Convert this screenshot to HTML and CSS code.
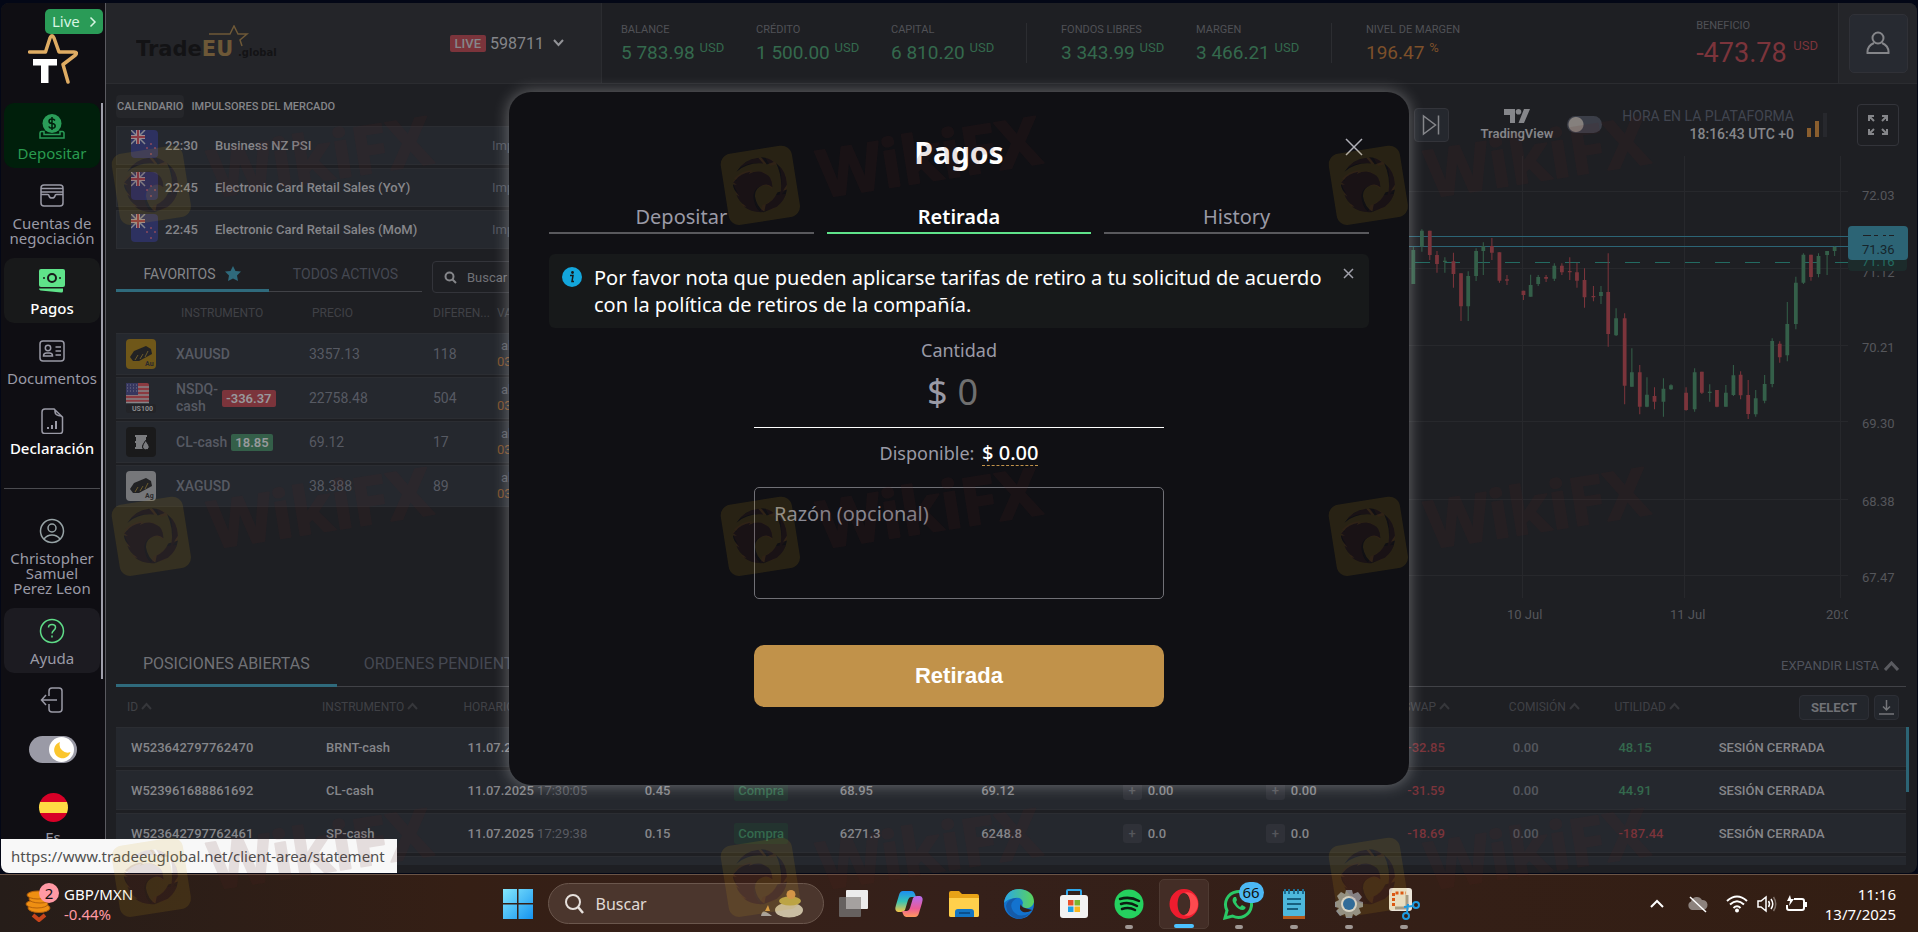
FILE: index.html
```html
<!DOCTYPE html>
<html lang="es">
<head>
  <meta charset="UTF-8" />
  <meta name="viewport" content="width=device-width, initial-scale=1.0"/>
  <title>TradeEU Global - Pagos</title>
  <link rel="stylesheet" href="styles.css">
</head>
<body>
  <div class="app">
    <nav class="sidebar">
      <div class="brand">
        <button class="live-btn">Live
          <svg width="8" height="12" viewBox="0 0 8 12"><path d="M1.5 1.5 6 6 1.5 10.5" fill="none" stroke="#d6f5e2" stroke-width="1.5"/></svg>
        </button>
        <svg class="brand-logo" width="50" height="50" viewBox="0 0 50 50">
          <path d="M1.5 18H17.5L22 4q2-4.500 4 0L31 18H46q4 0 1.500 3L35 30.5 40 48" fill="none" stroke="#dfac63" stroke-width="3.5" stroke-linecap="round" stroke-linejoin="round"/>
          <path d="M5 25H29V31.5H20.5V49H13V31.5H5Z" fill="#fff"/>
        </svg>
      </div>

      <div class="menu">
        <a href="#" class="item deposit">
          <svg width="26" height="26" viewBox="0 0 26 26" fill="none" stroke="#2a9d58" stroke-width="1.5"><path d="M5 18.5H2.5A1.5 1.5 0 0 0 1 20v5H25V20a1.5 1.5 0 0 0-1.5-1.5H21V21.5H5Z"/><circle cx="13" cy="10.5" r="9.5" fill="#2a9d58" stroke="none"/><path d="M16 7.5q-1-1.500-3-1.500-3 0-3 2.200t3 2.300q3.200.2 3.200 2.500t-3.200 2.300q-2.300 0-3.300-1.800M13 4v13" stroke="#001f0b"/></svg>
          <span>Depositar</span>
        </a>
        <a href="#" class="item">
          <svg width="26" height="26" viewBox="0 0 26 26" fill="none" stroke="#9a9aa6" stroke-width="1.5"><rect x="2" y="2" width="22" height="21" rx="3"/><path d="M2 5.5H24M2 9H24M2 11.5H8.5Q10 11.5 10 13q.5 2 3 2t3-2q0-1.500 1.500-1.500H24"/></svg>
          <span>Cuentas de negociación</span>
        </a>
        <a href="#" class="item active">
          <svg width="26" height="26" viewBox="0 0 26 26"><rect y="1" width="26" height="18" rx="2" fill="#5fe38a"/><circle cx="13" cy="10" r="4" fill="none" stroke="#18191a" stroke-width="2"/><circle cx="5" cy="10" r="1" fill="#18191a"/><circle cx="21" cy="10" r="1" fill="#18191a"/><path d="M0 20.5H24V23q0 2-2 1.500L1.5 22.5Q0 22 0 20.5Z" fill="#5fe38a"/></svg>
          <span>Pagos</span>
        </a>
        <a href="#" class="item">
          <svg width="26" height="26" viewBox="0 0 26 26" fill="none" stroke="#9a9aa6" stroke-width="1.5"><rect x="1" y="3" width="24" height="20" rx="3"/><circle cx="9" cy="10" r="2.7"/><path d="M4.5 18q0-3 3-3h3q3 0 3 3ZM16.5 9H22M16.5 13H22M16.5 17H22"/></svg>
          <span>Documentos</span>
        </a>
        <a href="#" class="item hover">
          <svg width="26" height="26" viewBox="0 0 26 26" fill="none" stroke="#9a9aa6" stroke-width="1.5"><path d="M15 1H6Q3 1 3 4V23q0 2.500 2.500 2.500H21q2.500 0 2.500-2.500V9ZM15 1q1 0 1 2.500 0 3 3.500 4Q23.5 8 23.5 9.500"/><path d="M9 21v-2M13 21v-4M17 21v-8" stroke-width="2"/></svg>
          <span>Declaración</span>
        </a>
        <hr>
        <a href="#" class="item">
          <svg width="26" height="26" viewBox="0 0 26 26" fill="none" stroke="#97a3a6" stroke-width="1.5"><circle cx="13" cy="13" r="11.5"/><circle cx="13" cy="10" r="4"/><path d="M5 21q3-4 8-4t8 4"/></svg>
          <span>Christopher<br>Samuel<br>Perez Leon</span>
        </a>
        <a href="#" class="item help">
          <svg width="26" height="26" viewBox="0 0 26 26" fill="none" stroke="#5fdc88" stroke-width="1.5"><circle cx="13" cy="13" r="11.5"/><path d="M9.5 9.5Q9.5 6.5 13 6.5t3.500 3q0 1.500-1.700 2.800T13 15.5M13 17.5v2"/></svg>
          <span>Ayuda</span>
        </a>
      </div>

      <a href="#" class="logout" aria-label="Salir">
        <svg width="26" height="26" viewBox="0 0 26 26" fill="none" stroke="#9a9aa6" stroke-width="1.5"><path d="M9 9V4q0-3 3-3h7q3 0 3 3V22q0 3-3 3H12q-3 0-3-3V17M17 13H1.500M6 8 1.500 13 6 18"/></svg>
      </a>
      <button class="theme" aria-label="Tema">
        <span><svg width="18" height="18" viewBox="0 0 18 18"><path d="M7 1A8.3 8.3 0 1 0 17.5 11 8 8 0 0 1 7 1Z" fill="#fbc62d"/></svg></span>
      </button>
      <a href="#" class="lang">
        <i class="flag-es"></i>
        <span>Es</span>
      </a>
      <i class="side-scroll"></i>
    </nav>

    <main class="main">
      <header class="topbar">
        <div class="account">
          <svg class="wordmark" width="146" height="36" viewBox="0 0 146 36">
            <text x="0" y="31" class="wm-main">Trade<tspan fill="#6d5837">EU</tspan></text>
            <text x="102" y="31" class="wm-small">.global</text>
            <path d="M73 9H94L98 1 102 9H111L104 15 106 21" fill="none" stroke="#6d5837" stroke-width="1.5"/>
          </svg>
          <button class="acc-picker"><b>LIVE</b> 598711
            <svg width="11" height="8" viewBox="0 0 11 8"><path d="M1 1 5.5 6 10 1" fill="none" stroke="#929397" stroke-width="2"/></svg>
          </button>
        </div>
        <dl class="stats">
          <div><dt>BALANCE</dt><dd>5 783.98 <sup>USD</sup></dd></div>
          <div><dt>CRÉDITO</dt><dd>1 500.00 <sup>USD</sup></dd></div>
          <div><dt>CAPITAL</dt><dd>6 810.20 <sup>USD</sup></dd></div>
          <div class="sep"><dt>FONDOS LIBRES</dt><dd>3 343.99 <sup>USD</sup></dd></div>
          <div><dt>MARGEN</dt><dd>3 466.21 <sup>USD</sup></dd></div>
          <div class="sep level"><dt>NIVEL DE MARGEN</dt><dd>196.47 <sup>%</sup></dd></div>
          <div class="profit"><dt>BENEFICIO</dt><dd>-473.78 <sup>USD</sup></dd></div>
        </dl>
        <div class="user">
          <button aria-label="Perfil">
            <svg width="24" height="24" viewBox="0 0 24 24" fill="none" stroke="#85868a" stroke-width="2"><circle cx="12" cy="7" r="5.5"/><path d="M8 12Q1 15 1.5 22H22.5Q23 15 16 12"/></svg>
          </button>
        </div>
      </header>

      <div class="content">
        <section class="market">
          <div class="cal-tabs">
            <button class="on">CALENDARIO</button>
            <button>IMPULSORES DEL MERCADO</button>
          </div>
          <ul class="events">
            <li><svg width="27" height="28"><use href="#nz"/></svg><time>22:30</time><span>Business NZ PSI</span><em>Impacto</em></li>
            <li><svg width="27" height="28"><use href="#nz"/></svg><time>22:45</time><span>Electronic Card Retail Sales (YoY)</span><em>Impacto</em></li>
            <li><svg width="27" height="28"><use href="#nz"/></svg><time>22:45</time><span>Electronic Card Retail Sales (MoM)</span><em>Impacto</em></li>
          </ul>

          <div class="fav-bar">
            <button class="on">FAVORITOS <svg width="16" height="15" viewBox="0 0 16 15"><path d="M8 0 10.5 5 16 5.5 12 9.5 13 15 8 12.5 3 15 4 9.5 0 5.5 5.5 5Z" fill="#2f6a7c"/></svg></button>
            <button>TODOS ACTIVOS</button>
            <label class="search">
              <svg width="13" height="13" viewBox="0 0 13 13" fill="none" stroke="#85868a" stroke-width="2"><circle cx="5.5" cy="5.5" r="4"/><path d="M8.5 8.5 12 12"/></svg>
              <input type="text" placeholder="Buscar" aria-label="Buscar">
            </label>
          </div>

          <table class="assets">
            <colgroup><col class="c-name"><col class="c-price"><col class="c-diff"><col></colgroup>
            <thead><tr><th>INSTRUMENTO</th><th>PRECIO</th><th>DIFEREN...</th><th>VARIACIÓN</th></tr></thead>
            <tbody>
              <tr>
                <td><div class="asset"><svg width="30" height="30"><rect width="30" height="30" rx="4" fill="#6f5719"/><use href="#bar"/><text x="19" y="27">Au</text></svg>XAUUSD</div></td>
                <td>3357.13</td><td>118</td><td class="time">abre en<b>03:43:17</b></td>
              </tr>
              <tr>
                <td><div class="asset"><svg width="30" height="30"><rect width="23" height="20" rx="2" fill="#8b3a40"/><path d="M0 4H23M0 8H23M0 12H23M0 16H23M0 19.500H23" stroke="#858588" stroke-width="1.5"/><rect width="12" height="12" fill="#36375f"/><path d="M1 2H11M1 5H11M1 8H11" stroke="#74758c" stroke-dasharray="1 2"/><rect y="21" width="30" height="9" rx="3" fill="#232428"/><text x="6" y="28" fill="#8b8c8f">US100</text></svg><span>NSDQ-<br>cash</span><b class="loss">-336.37</b></div></td>
                <td>22758.48</td><td>504</td><td class="time">abre en<b>03:43:17</b></td>
              </tr>
              <tr>
                <td><div class="asset"><svg width="30" height="30"><rect width="30" height="30" rx="4" fill="#1a1a1b"/><path d="M9 8H21V10H20V13L16 19Q16 21 17 22H9V20H10V16H9V14H10V10H9Z" fill="#7a7b7e"/><path d="M19.5 13.500Q24 19 23 21A3.5 3.5 0 0 1 16.5 20Q16.5 18 19.5 13.500Z" fill="#7a7b7e" stroke="#1a1a1b"/></svg>CL-cash<b class="gain">18.85</b></div></td>
                <td>69.12</td><td>17</td><td class="time">abre en<b>03:43:17</b></td>
              </tr>
              <tr>
                <td><div class="asset"><svg width="30" height="30"><rect width="30" height="30" rx="4" fill="#76777a"/><use href="#bar"/><text x="19" y="27">Ag</text></svg>XAGUSD</div></td>
                <td>38.388</td><td>89</td><td class="time">abre en<b>03:43:17</b></td>
              </tr>
            </tbody>
          </table>
        </section>

        <section class="chart">
          <div class="chart-tools">
            <button class="next" aria-label="Siguiente"><svg width="18" height="22" viewBox="0 0 18 22" fill="none" stroke="#85868a" stroke-width="1.5"><path d="M1.5 2V20L13.5 11ZM16.5 1.500V20.500"/></svg></button>
            <label class="tv" for="tv-switch">
              <svg width="26" height="14" viewBox="0 0 26 14" fill="#85868a"><path d="M0 0H11V14H6V6H0ZM20 0H26L20 14H14.500Z"/><circle cx="14.5" cy="2.8" r="2.8"/></svg>
              TradingView
            </label>
            <input type="checkbox" id="tv-switch" class="switch">
            <div class="clock"><span>HORA EN LA PLATAFORMA</span><b>18:16:43 UTC +0</b></div>
            <svg class="signal" width="20" height="24" viewBox="0 0 20 24"><path d="M2 24V15M10 24V8" stroke="#8a5e2e" stroke-width="4"/><path d="M18 24V0" stroke="#27282d" stroke-width="4"/></svg>
            <button class="full" aria-label="Pantalla completa"><svg width="20" height="20" viewBox="0 0 20 20" fill="none" stroke="#85868a" stroke-width="2"><path d="M1 6V1H6M14 1H19V6M19 14V19H14M6 19H1V14M1 1 6 6M19 1 14 6M19 19 14 14M1 19 6 14"/></svg></button>
          </div>

          <svg class="plot" width="538" height="480" viewBox="0 50 538 480">
            <path d="M143.5 56V498M305.5 56V498M461.5 56V498M0 91.5H469M0 168.5H469M0 245.5H469M0 321.5H469M0 399.5H469M0 475.5H469" stroke="#27282c" fill="none"/>
            <path d="M0 136.5H469M0 146.5H469" stroke="#2c6475"/>
            <path d="M6 162.500H469" stroke="#236b62" stroke-dasharray="15 15"/>
            <g transform="scale(.3431 .3333)" fill="none">
              <path class="up wick" d="M100 440V552M125 388V455M192 472V518M260 514V663M283 445V543M304 427V525M442 524V590M464 525V558M511 490V543M647 558V612M691 625V708M737 745V860M781 832V922M829 835V950M851 853V870M920 805V935M964 853V905M1011 855V920M1033 795V888M1098 870V950M1124 825V910M1146 715V862M1190 606V784M1215 530V688M1237 460V552M1281 460V532M1306 453V525M1328 438V468"/>
              <path class="up body" d="M100 450V552M125 392V440M192 482V486M260 528V619M283 453V528M304 438V453M442 555V590M464 531V552M511 497V536M647 576V588M691 655V706M737 817V860M781 884V920M829 866V905M851 856V868M920 817V928M964 875V879M1011 878V920M1033 826V885M1098 895V943M1124 852V902M1146 723V852M1190 672V766M1215 548V672M1237 464V548M1281 468V522M1306 453V465M1328 441V453"/>
              <path class="down wick" d="M148 392V480M169 453V518M217 458V563M239 520V663M329 414V480M351 457V548M373 525V555M421 572V600M487 525V546M533 490V525M556 472V540M577 488V563M599 505V623M625 558V604M668 460V740M716 640V913M760 795V943M803 862V928M895 862V932M941 815V882M985 870V922M1054 814V898M1076 840V957M1168 724V788M1259 464V542"/>
              <path class="down body" d="M148 392V465M169 465V492M217 484V522M239 520V619M329 438V458M351 457V542M373 538V542M421 572V585M487 531V536M533 497V517M556 513V517M577 517V542M599 540V592M625 588V592M668 576V702M716 655V857M760 817V920M803 888V905M895 878V930M941 815V878M985 870V920M1054 824V886M1076 885V942M1168 731V772M1259 464V531"/>
            </g>
            <g class="axis">
              <text x="483" y="100">72.03</text>
              <text x="483" y="177">71.12</text>
              <text x="483" y="252">70.21</text>
              <text x="483" y="328">69.30</text>
              <text x="483" y="406">68.38</text>
              <text x="483" y="482">67.47</text>
              <text x="128" y="519">10 Jul</text>
              <text x="291" y="519">11 Jul</text>
              <svg width="469" height="530"><text x="447" y="519">20:00</text></svg>
            </g>
            <rect x="469" y="140" width="59" height="31" rx="4" fill="#1c2b2b"/>
            <text x="483" y="166" class="tag-under">71.16</text>
            <rect x="469" y="126" width="60" height="34" rx="4" fill="#2c6475"/>
            <path d="M484 135.500H492M495 135.500H499M504 135.500H507M510 135.500H515" stroke="#1e1f23"/>
            <text x="483" y="154" class="tag">71.36</text>
          </svg>
        </section>
      </div>

      <section class="positions">
        <div class="pos-tabs">
          <button class="on">POSICIONES ABIERTAS</button>
          <button>ORDENES PENDIENTES</button>
          <button class="expand">EXPANDIR LISTA <svg width="15" height="10" viewBox="0 0 15 10"><path d="M1 9 7.5 2 14 9" fill="none" stroke="#5a5b60" stroke-width="3"/></svg></button>
        </div>
        <div class="pos-body">
          <table class="orders">
            <colgroup>
              <col style="width:10.9%"><col style="width:7.9%"><col style="width:9.9%"><col style="width:5%"><col style="width:5.9%"><col style="width:7.9%"><col style="width:7.9%"><col style="width:8%"><col style="width:7.9%"><col style="width:5.9%"><col style="width:5.9%"><col style="width:5.6%"><col>
            </colgroup>
            <thead>
              <tr>
                <th>ID <svg class="sort"><use href="#up"/></svg></th>
                <th>INSTRUMENTO <svg class="sort"><use href="#up"/></svg></th>
                <th>HORARIO <svg class="sort"><use href="#up"/></svg></th>
                <th></th><th></th><th></th><th></th><th></th><th></th>
                <th>SWAP <svg class="sort"><use href="#up"/></svg></th>
                <th>COMISIÓN <svg class="sort"><use href="#up"/></svg></th>
                <th>UTILIDAD <svg class="sort"><use href="#up"/></svg></th>
                <th><div class="actions"><button>SELECT</button><button class="dl" aria-label="Descargar"><svg width="15" height="15" viewBox="0 0 15 15" fill="none" stroke="#75767a" stroke-width="1.5"><path d="M7.5 0V10M4 6.5 7.5 10 11 6.5M0 14H15"/></svg></button></div></th>
              </tr>
            </thead>
            <tbody>
              <tr><td>W523642797762470</td><td>BRNT-cash</td><td>11.07.2025 <i>17:30:22</i></td><td>0.30</td><td><mark>Compra</mark></td><td>70.45</td><td>70.61</td><td><s>+</s>0.00</td><td><s>+</s>0.00</td><td class="neg">-32.85</td><td class="dim">0.00</td><td class="pos">48.15</td><td>SESIÓN CERRADA</td></tr>
              <tr><td>W523961688861692</td><td>CL-cash</td><td>11.07.2025 <i>17:30:05</i></td><td>0.45</td><td><mark>Compra</mark></td><td>68.95</td><td>69.12</td><td><s>+</s>0.00</td><td><s>+</s>0.00</td><td class="neg">-31.59</td><td class="dim">0.00</td><td class="pos">44.91</td><td>SESIÓN CERRADA</td></tr>
              <tr><td>W523642797762461</td><td>SP-cash</td><td>11.07.2025 <i>17:29:38</i></td><td>0.15</td><td><mark>Compra</mark></td><td>6271.3</td><td>6248.8</td><td><s>+</s>0.0</td><td><s>+</s>0.0</td><td class="neg">-18.69</td><td class="dim">0.00</td><td class="neg">-187.44</td><td>SESIÓN CERRADA</td></tr>
              <tr><td></td><td></td><td></td><td></td><td></td><td></td><td></td><td></td><td></td><td></td><td></td><td></td><td></td></tr>
            </tbody>
          </table>
          <i class="thumb"></i>
        </div>
      </section>
    </main>

    <div class="overlay">
      <div class="modal" role="dialog" aria-label="Pagos">
        <button class="close" aria-label="Cerrar"><svg width="18" height="18" viewBox="0 0 18 18"><path d="M1 1 17 17M17 1 1 17" stroke="#b0b0b8" stroke-width="1.5"/></svg></button>
        <h1>Pagos</h1>
        <div class="tabs">
          <button>Depositar</button>
          <button class="on">Retirada</button>
          <button>History</button>
        </div>
        <div class="notice">
          <svg width="20" height="20" viewBox="0 0 20 20"><circle cx="10" cy="10" r="10" fill="#13a6dc"/><circle cx="10.5" cy="5.5" r="1.4" fill="#17191a"/><path d="M8 8.500H11L10 14.500H12" fill="none" stroke="#17191a" stroke-width="1.5"/></svg>
          <p>Por favor nota que pueden aplicarse tarifas de retiro a tu solicitud de acuerdo con la política de retiros de la compañía.</p>
          <button aria-label="Ocultar aviso"><svg width="11" height="11" viewBox="0 0 11 11"><path d="M1 1 10 10M10 1 1 10" stroke="#a0a0aa" stroke-width="1.5"/></svg></button>
        </div>
        <form class="withdraw">
          <label for="amount">Cantidad</label>
          <div class="amount"><span>$</span><input id="amount" type="text" placeholder="0"></div>
          <p class="avail">Disponible: <b>$ 0.00</b></p>
          <textarea placeholder="Razón (opcional)" aria-label="Razón (opcional)"></textarea>
          <button type="button">Retirada</button>
        </form>
      </div>
    </div>

    <div class="status-url">https://www.tradeeuglobal.net/client-area/statement</div>
  </div>

  <footer class="taskbar">
    <div class="widget">
      <div class="coins">
        <svg width="34" height="38" viewBox="0 0 34 38"><g fill="#ef8f12" stroke="#b5610b"><ellipse cx="14" cy="24" rx="11" ry="4.5"/><ellipse cx="12" cy="20" rx="11" ry="4"/><ellipse cx="15" cy="15" rx="11" ry="4"/><ellipse cx="13" cy="11" rx="11" ry="4"/></g><path d="M8 31 14 36 20 31" fill="none" stroke="#c8451b" stroke-width="4"/></svg>
        <span>2</span>
      </div>
      <p>GBP/MXN<b>-0.44%</b></p>
    </div>

    <div class="dock">
      <button aria-label="Inicio"><svg width="30" height="30" viewBox="0 0 30 30"><defs><linearGradient id="win" x2="1" y2="1"><stop stop-color="#84e8fd"/><stop offset="1" stop-color="#1593f0"/></linearGradient></defs><path d="M0 0H14V14H0ZM15.5 0H30V14H15.5ZM0 15.5H14V30H0ZM15.5 15.5H30V30H15.5Z" fill="url(#win)"/></svg></button>
      <label class="find">
        <svg width="20" height="20" viewBox="0 0 20 20" fill="none" stroke="#e6e0dc" stroke-width="2"><circle cx="9" cy="8" r="7"/><path d="M14 13 19 19" stroke-width="2.5"/></svg>
        <input type="text" placeholder="Buscar" aria-label="Buscar en Windows">
        <svg width="42" height="28" viewBox="0 0 42 28"><ellipse cx="28" cy="20" rx="14" ry="7.5" fill="#c9bda2"/><ellipse cx="29" cy="11" rx="11" ry="4.5" fill="#b9a54b"/><circle cx="30" cy="4.5" r="4.5" fill="#d4954f"/><path d="M0 26Q1 20 5 22T11 26Z" fill="#a9a39b"/><path d="M4 21 7 15 9 21Z" fill="#d79b4a"/></svg>
      </label>
      <button aria-label="Vista de tareas"><svg width="30" height="30" viewBox="0 0 30 30"><rect y="8" width="22" height="20" rx="1" fill="#66615f"/><rect x="7" y="1" width="22" height="19" rx="1" fill="#ececec"/><path d="M7 8H22V20H7Z" fill="#a5a19f"/></svg></button>
      <button aria-label="Copilot"><svg width="30" height="30" viewBox="0 0 30 30"><defs><linearGradient id="cp" x2="0" y2="1"><stop stop-color="#1b8df2"/><stop offset=".5" stop-color="#38c3b4"/><stop offset="1" stop-color="#f5c545"/></linearGradient><linearGradient id="cq" x2="0" y2="1"><stop stop-color="#b36df0"/><stop offset=".6" stop-color="#ec5b96"/><stop offset="1" stop-color="#ff9a5c"/></linearGradient></defs><path d="M9 2H18Q20 2 21 5L22 8H17Q15 8 14 11L11 21Q10 23 7 23H4Q0 22 2 16L5 6Q6 2 9 2Z" fill="url(#cp)"/><path d="M21 28H12Q10 28 9 25L8 22H13Q15 22 16 19L19 9Q20 7 23 7H26Q30 8 28 14L25 24Q24 28 21 28Z" fill="url(#cq)"/></svg></button>
      <button aria-label="Explorador"><svg width="32" height="30" viewBox="0 0 32 30"><path d="M1 4Q1 2 3 2H11L14 5H29Q31 5 31 7V26Q31 28 29 28H3Q1 28 1 26Z" fill="#e8a317"/><path d="M1 9H31V26Q31 28 29 28H3Q1 28 1 26Z" fill="#ffd04c"/><path d="M7 28V23Q7 20 10 20H23Q26 20 26 23V28Z" fill="#1275c4"/><path d="M11 24H22" stroke="#0a4f8c" stroke-width="2"/></svg></button>
      <button aria-label="Edge"><svg width="30" height="30" viewBox="0 0 30 30"><defs><linearGradient id="eg"><stop stop-color="#2aa7e8"/><stop offset="1" stop-color="#5bd35a"/></linearGradient></defs><circle cx="15" cy="15" r="15" fill="#1373cf"/><path d="M0 14Q2 0 16 0 30 2 30 13 28 20 21 19 17 18 19 14 18 8 11 9 3 10 0 14Z" fill="url(#eg)"/><path d="M13 9Q4 14 9 22 15 30 26 24 20 30 14 30 3 27 2 17 4 9 13 9Z" fill="#155ba9"/><path d="M17 15Q14 20 19 23 24 24 28 21 24 20 21 19 17 18 17 15Z" fill="#35201a"/></svg></button>
      <button aria-label="Store"><svg width="30" height="30" viewBox="0 0 30 30"><path d="M8 7V2Q8 1 9 1H21Q22 1 22 2V7" fill="none" stroke="#2fa7ea" stroke-width="2"/><rect x="1" y="6" width="28" height="23" rx="3" fill="#f2f2f2"/><path d="M9 11H14.5V16.5H9Z" fill="#e8502b"/><path d="M15.5 11H21V16.5H15.5Z" fill="#7db52e"/><path d="M9 17.5H14.5V23H9Z" fill="#1e9fe4"/><path d="M15.5 17.5H21V23H15.5Z" fill="#f8b71c"/></svg></button>
      <button aria-label="Spotify" class="run"><svg width="30" height="30" viewBox="0 0 30 30"><circle cx="15" cy="15" r="14.5" fill="#25d15f"/><path d="M6 10Q16 7 25 12M7 15Q15 12.5 23 17M8 20Q15 17.5 21 21" fill="none" stroke="#0c1c12" stroke-width="2.5" stroke-linecap="round"/></svg></button>
      <button aria-label="Opera" class="run current"><svg width="30" height="30" viewBox="0 0 30 30"><path fill-rule="evenodd" d="M15 0A14.5 15 0 0 1 15 30 14.5 15 0 0 1 15 0ZM15 4C6.5 4 6.5 26 15 26S23.5 4 15 4Z" fill="#ee1c2e"/><path d="M15 4C23.5 4 23.5 26 15 26 20 29 29 24 29 15S20 1 15 4Z" fill="#ff4a4f"/></svg></button>
      <button aria-label="WhatsApp" class="run"><svg width="32" height="32" viewBox="0 0 32 32"><path d="M2 30 4 22.500A13 13 0 1 1 9.500 28Z" fill="none" stroke="#2ac866" stroke-width="3"/><path d="M11 9Q8 12 11 16 15 22 20 22 23 21 22.500 19L19 17 17 19Q14 17 13 14L14 12 13 9Z" fill="#2ac866"/></svg><span class="count">66</span></button>
      <button aria-label="Bloc de notas" class="run"><svg width="24" height="30" viewBox="0 0 24 30"><path d="M1 26H23V30H1Z" fill="#b25a1c"/><rect x="1" y="2" width="22" height="25" rx="1" fill="#4db8dc"/><path d="M3 0V5M7 0V5M12 0V5M16 0V5M21 0V5" stroke="#1c6d92" stroke-width="2"/><path d="M5 10H19M5 15H19M5 20H16" stroke="#17607f" stroke-width="2"/></svg></button>
      <button aria-label="Ajustes" class="run"><svg width="30" height="30" viewBox="0 0 30 30"><path d="M12 1H18L19 5 24 3 28 8 25 12 29 13V18L25 19 27 24 22 27 19 25 18 29H12L11 25 6 27 2 22 5 19 1 18V13L5 11 3 7 7 3 11 5Z" fill="#8d8f92"/><circle cx="15" cy="15" r="8" fill="#d8dadc"/><circle cx="15" cy="15" r="6" fill="#1b64ac"/></svg></button>
      <button aria-label="Recortes" class="run"><svg width="32" height="32" viewBox="0 0 32 32"><rect x="1" y="0" width="23" height="23" rx="3" fill="#ece6da"/><path d="M5.5 18V5H18" fill="none" stroke="#dd4e13" stroke-width="3" stroke-dasharray="3 2"/><path d="M19 7V20H7" fill="none" stroke="#a39c90" stroke-width="3"/><g fill="none" stroke="#1e9be0" stroke-width="2"><circle cx="28" cy="17" r="3"/><circle cx="18" cy="28" r="3"/><path d="M25 18 16 19M19 25 20 16"/></g></svg></button>
    </div>

    <div class="tray">
      <svg width="14" height="10" viewBox="0 0 14 10"><path d="M1 8 7 2 13 8" fill="none" stroke="#fff" stroke-width="2"/></svg>
      <svg class="cloud" width="21" height="18" viewBox="0 0 21 18"><path d="M5 15A4.5 4.5 0 0 1 4 6.5 6 6 0 0 1 15 5 5 5 0 0 1 16 15Z" fill="#8c827d"/><path d="M3 2 19 17" stroke="#fff" stroke-width="1.5"/></svg>
      <svg width="22" height="18" viewBox="0 0 22 18" fill="none" stroke="#fff" stroke-width="2"><path d="M1 6Q11-3 21 6M4 9.5Q11 3 18 9.5M7.5 13Q11 9.5 14.5 13"/><circle cx="11" cy="15.5" r="1"/></svg>
      <svg width="20" height="18" viewBox="0 0 20 18" fill="none" stroke="#fff" stroke-width="1.5"><path d="M1 6H4L9 2V16L4 12H1ZM11.5 6Q13.5 9 11.5 12M14 4Q17.5 9 14 14"/><path d="M16.5 2Q21 9 16.5 16" stroke="#7d6f67"/></svg>
      <svg width="21" height="18" viewBox="0 0 21 18" fill="none" stroke="#fff" stroke-width="2"><path d="M8 4H16Q18 4 18 6V13Q18 15 16 15H3Q1 15 1 13V10M20 7V12"/><path d="M4 0 1 6H4L3 11 8 4H5Z" fill="#fff" stroke="none"/></svg>
      <p>11:16<br>13/7/2025</p>
    </div>
  </footer>

  <svg class="watermark" width="100%" height="100%" aria-hidden="true">
    <defs>
      <g id="hawk">
        <path stroke="none" d="M56 70Q84 36 128 38L140 58Q96 46 56 70ZM136 38Q158 42 172 58L150 62ZM178 62Q206 92 200 132L176 158Q192 108 178 62ZM168 150 198 146Q188 178 160 192L120 202 128 180Q152 174 168 150Z"/>
        <path stroke="none" d="M52 92Q66 78 98 76L92 82Q124 72 142 90 160 100 156 132 144 118 128 122 104 126 100 150 100 184 122 202 84 200 62 176L70 178Q48 158 46 138L54 144Q38 122 40 106L52 108 42 100Z"/>
      </g>
      <mask id="cut"><rect x="-20" y="-20" width="290" height="290" fill="#fff"/><use href="#hawk" fill="#000"/></mask>
      <g id="wiki">
        <g transform="scale(.3333)">
          <rect x="13" y="13" width="216" height="216" rx="32" transform="rotate(-9 121 121)" fill="rgb(207,161,26)" fill-opacity=".13" mask="url(#cut)"/>
          <use href="#hawk" fill="rgb(93,35,35)" opacity=".12"/>
        </g>
        <text transform="translate(102 53) rotate(-9)" class="wiki-text">WikiFX</text>
      </g>
      <g id="nz">
        <rect width="27" height="28" rx="4" fill="#2d3160"/>
        <path d="M0 0 14 14M14 0 0 14" stroke="#85868f" stroke-width="1.5"/>
        <path d="M7 0V14M0 7H14" stroke="#9a8c92" stroke-width="4"/>
        <path d="M7 0V14M0 7H14" stroke="#8b3a44" stroke-width="2"/>
        <g fill="#8b4a5c"><circle cx="20" cy="14" r="1"/><circle cx="16" cy="18" r="1"/><circle cx="24" cy="18" r="1"/><circle cx="20" cy="24" r="1"/></g>
      </g>
      <g id="bar"><path d="M4 18 8 12 20 7 25 10 26 15 13 22 7 22Z" fill="#222224"/><path d="M9 21 12 16M14 20 17 15M19 18 22 12" stroke="#6b5a2c"/></g>
      <g id="up"><path d="M1 7 5.5 2 10 7" fill="none" stroke="#36373b" stroke-width="2"/></g>
    </defs>
    <use href="#wiki" x="111" y="145"/><use href="#wiki" x="720" y="145"/><use href="#wiki" x="1328" y="145"/>
    <use href="#wiki" x="111" y="496"/><use href="#wiki" x="720" y="496"/><use href="#wiki" x="1328" y="496"/>
    <use href="#wiki" x="111" y="837"/><use href="#wiki" x="720" y="837"/><use href="#wiki" x="1328" y="837"/>
  </svg>
</body>
</html>
```

FILE: styles.css
```css
* {
  margin: 0;
  padding: 0;
  box-sizing: border-box;
}

body {
  height: 100vh;
  background: #030716;
  display: flex;
  flex-direction: column;
  overflow: hidden;
  font-family: Roboto, "Liberation Sans", sans-serif;
  font-size: 14px;
  color: #85868a;
}

button, input, textarea {
  font: inherit;
  color: inherit;
  background: none;
  border: 0;
  outline: 0;
}

a {
  color: inherit;
  text-decoration: none;
}

svg {
  flex: none;
  display: block;
}

.app {
  flex: 1;
  min-height: 0;
  margin: 3px 1px 1px;
  display: flex;
  position: relative;
  background: #1e1f23;
  border-radius: 8px;
  overflow: hidden;
}

/* Sidebar */
.sidebar {
  flex: none;
  width: 105px;
  position: relative;
  background: #0f0e13;
  border-right: 1px solid #5a5a60;
  display: flex;
  flex-direction: column;
  align-items: center;
  font-family: "Noto Sans", sans-serif;
  font-size: 15px;
  line-height: 15px;
  color: #9a9aa6;
}

.brand {
  align-self: stretch;
  height: 100px;
  padding: 6px 2px 0 27px;
  display: flex;
  flex-direction: column;
}

.live-btn {
  align-self: flex-end;
  width: 58px;
  height: 25px;
  padding: 0 6px 0 7px;
  display: flex;
  align-items: center;
  justify-content: space-between;
  background: #2a9b57;
  color: #d6f5e2;
  border-radius: 5px;
}

.menu {
  align-self: stretch;
  padding: 0 5px 0 3px;
  display: flex;
  flex-direction: column;
  gap: 5px;
}

.item {
  padding: 10px 0 7px;
  border-radius: 10px;
  display: flex;
  flex-direction: column;
  align-items: center;
  gap: 7px;
  text-align: center;
}

.deposit {
  background: #001f0b;
  color: #2a9b50;
}

.active {
  background: #18191a;
  color: #fff;
  font-weight: 500;
}

.hover {
  color: #fff;
  font-weight: 500;
}

.help {
  background: #1c1b21;
}

.menu hr {
  border: 0;
  border-top: 1px solid #4b4b50;
  margin: 20px 0 14px;
}

.logout {
  margin-top: 14px;
}

.theme {
  margin-top: 23px;
  width: 48px;
  height: 27px;
  padding: 1px 3px;
  border-radius: 14px;
  background: #9a9aa6;
  display: flex;
  justify-content: flex-end;
}

.theme span {
  width: 25px;
  height: 25px;
  border-radius: 50%;
  background: #fff;
  display: grid;
  place-items: center;
}

.lang {
  margin-top: 30px;
  display: flex;
  flex-direction: column;
  align-items: center;
  gap: 8px;
}

.flag-es {
  width: 29px;
  height: 29px;
  border-radius: 50%;
  background: linear-gradient(#d80027 32%, #ffda44 32% 68%, #d80027 68%);
}

.side-scroll {
  position: absolute;
  top: 100px;
  right: 2px;
  width: 2px;
  height: 576px;
  background: #a0a0ac;
}

/* Top bar */
.main {
  flex: 1;
  min-width: 0;
  display: flex;
  flex-direction: column;
}

.topbar {
  height: 81px;
  display: flex;
  border-bottom: 1px solid #2b2c30;
}

.account {
  flex: none;
  width: 496px;
  padding: 0 37px 0 30px;
  background: #242529;
  border-right: 1px solid #2b2c30;
  display: flex;
  align-items: center;
  justify-content: space-between;
}

.wm-main, .wm-small {
  font-family: "DejaVu Sans", sans-serif;
  font-weight: bold;
  font-size: 21px;
  fill: #131315;
}

.wm-small {
  font-size: 10px;
}

.acc-picker {
  display: flex;
  align-items: center;
  gap: 4px;
  font-size: 16px;
}

.acc-picker b {
  padding: 0 5px;
  line-height: 17px;
  font-size: 13px;
  font-weight: 500;
  background: #7b343b;
  border-radius: 2px;
}

.acc-picker svg {
  margin-left: 5px;
}

.stats {
  flex: 1;
  display: flex;
  align-items: center;
  padding-left: 19px;
  color: #34694d;
}

.stats div {
  width: 135px;
  height: 40px;
  line-height: 14px;
}

.stats .sep {
  width: 170px;
  padding-left: 34px;
  border-left: 1px solid #2c2d31;
}

.stats dt {
  font-size: 11px;
  color: #505156;
}

.stats dd {
  font-size: 19px;
  line-height: 32px;
  white-space: nowrap;
}

.stats sup {
  font-size: 13px;
  line-height: 1;
}

.stats .level dd {
  color: #7d502a;
}

.stats .profit {
  width: auto;
  margin-left: auto;
  margin-right: 20px;
  height: 48px;
}

.stats .profit dd {
  font-size: 27px;
  line-height: 41px;
  color: #7b343b;
}

.stats .profit sup {
  font-size: 13px;
  vertical-align: 12px;
}

.user {
  width: 79px;
  background: #242529;
  border-left: 1px solid #2b2c30;
  display: grid;
  place-items: center;
}

.user button {
  width: 59px;
  height: 59px;
  background: #272a31;
  border: 1px solid #303137;
  border-radius: 5px;
  display: grid;
  place-items: center;
}

/* Calendar and assets */
.content {
  flex: 1;
  min-height: 0;
  display: flex;
}

.market {
  flex: 0 0 560px;
  padding-left: 10px;
}

.cal-tabs {
  padding: 11px 0 8px;
  display: flex;
  gap: 6px;
}

.cal-tabs button {
  height: 23px;
  padding: 0 1px;
  font-size: 11px;
  font-weight: 500;
  border-radius: 4px;
}

.cal-tabs .on {
  background: #25262a;
}

.events {
  list-style: none;
  display: flex;
  flex-direction: column;
  gap: 3px;
}

.events li {
  height: 39px;
  padding: 0 14px;
  display: flex;
  align-items: center;
  background: #25282e;
  border: 1px solid #2b2d32;
  font-size: 13px;
  font-weight: 500;
}

.events svg {
  align-self: flex-start;
  margin-top: 3px;
}

.events time {
  width: 57px;
  padding-left: 7px;
}

.events span {
  width: 277px;
}

.events em {
  font-style: normal;
  font-weight: 400;
  color: #50545f;
}

.fav-bar {
  display: flex;
  height: 43px;
  align-items: flex-end;
}

.fav-bar button {
  width: 153px;
  height: 33px;
  padding-bottom: 3px;
  display: flex;
  align-items: center;
  justify-content: center;
  gap: 10px;
  color: #454852;
  border-bottom: 1px solid #414247;
}

.fav-bar .on {
  padding-bottom: 1px;
  color: #85868a;
  border-bottom: 3px solid #2f6a7c;
}

.search {
  margin-left: 10px;
  margin-bottom: -1px;
  height: 32px;
  width: 128px;
  padding: 0 11px;
  display: flex;
  align-items: center;
  gap: 10px;
  border: 1px solid #33343a;
  border-radius: 4px;
  font-size: 13px;
}

.search input {
  width: 80px;
}

.search input::placeholder {
  color: #707176;
}

.assets {
  width: 100%;
  table-layout: fixed;
  border-spacing: 0 2px;
}

.c-name { width: 193px; }
.c-price { width: 124px; }
.c-diff { width: 64px; }

th {
  font-size: 12px;
  font-weight: 400;
  text-align: left;
  color: #404146;
  white-space: nowrap;
}

.assets th {
  height: 37px;
}

.assets th:first-child {
  padding-left: 65px;
}

.assets th:nth-child(2) {
  padding-left: 3px;
}

.assets td {
  height: 42px;
  background: #25282e;
  border-top: 1px solid #2b2d32;
  border-bottom: 1px solid #2b2d32;
  color: #575a63;
}

.asset {
  padding-left: 10px;
  display: flex;
  align-items: center;
  font-weight: 500;
  line-height: 17px;
}

.asset svg {
  margin-right: 20px;
}

.asset svg text {
  font-size: 7px;
  font-weight: bold;
  fill: #2a2a2c;
}

.asset svg text[fill] {
  fill: #8b8c8f;
}

.asset b {
  margin-left: 4px;
  padding: 0 4px;
  font-size: 13px;
  font-weight: 600;
  border-radius: 2px;
  color: #98999c;
}

.loss { background: #7b343b; }
.gain { background: #345f49; }

.assets .time {
  line-height: 16px;
  padding-left: 4px;
  font-size: 13px;
}

.time b {
  display: block;
  margin-left: -4px;
  font-weight: 400;
  color: #7d502a;
}

/* Chart */
.chart {
  flex: 1;
  min-width: 0;
  display: flex;
  flex-direction: column;
  align-items: flex-end;
}

.chart-tools {
  margin: 18px 18px 0 0;
  height: 45px;
  display: flex;
  align-items: center;
}

.chart-tools button {
  display: grid;
  place-items: center;
  border: 1px solid #33343a;
  border-radius: 4px;
}

.next {
  width: 35px;
  height: 34px;
  margin-right: 32px;
  background: #25282e;
}

.tv {
  display: flex;
  flex-direction: column;
  align-items: center;
  gap: 3px;
  font-size: 13px;
  font-weight: 600;
}

.switch {
  appearance: none;
  width: 35px;
  height: 17px;
  margin: 0 20px 0 14px;
  border-radius: 9px;
  background: radial-gradient(circle at 9px 50%, #85807d 7px, #3b3e48 8px);
}

.clock {
  text-align: right;
  font-size: 14px;
  line-height: 18px;
  color: #414550;
}

.clock b {
  display: block;
  font-weight: 500;
  color: #85868a;
}

.signal {
  margin: 0 30px 0 13px;
}

.full {
  width: 42px;
  height: 42px;
}

.plot {
  margin-top: 3px;
}

.up { stroke: #345f49; }
.down { stroke: #7b343b; }
.wick { stroke-width: 3; }
.body { stroke-width: 11; }

.axis text, .tag, .tag-under {
  font-size: 13px;
  fill: #55565b;
}

.plot .tag { fill: #16242b; }
.plot .tag-under { fill: #236b62; }

/* Positions */
.pos-tabs {
  height: 47px;
  margin: 0 11px 0 10px;
  display: flex;
  border-bottom: 1px solid #414247;
}

.pos-tabs button {
  padding: 0 27px;
  margin-bottom: -1px;
  font-size: 16px;
  color: #454852;
}

.pos-tabs .on {
  padding-top: 3px;
  color: #707176;
  border-bottom: 3px solid #2f6a7c;
}

.pos-tabs .expand {
  margin-left: auto;
  padding: 4px 7px 0 0;
  display: flex;
  align-items: center;
  gap: 5px;
  font-size: 13px;
  color: #50535c;
}

.pos-body {
  height: 178px;
  margin: 0 11px 8px 10px;
  position: relative;
  clip-path: inset(0 -3px 0 0);
}

.orders {
  width: 100%;
  table-layout: fixed;
  border-spacing: 0 3px;
}

.orders th {
  height: 34px;
  padding-left: 11px;
}

.sort {
  display: inline-block;
  width: 11px;
  height: 9px;
}

.orders td {
  height: 40px;
  padding-left: 15px;
  background: #25282e;
  border-top: 1px solid #2b2d32;
  border-bottom: 1px solid #2b2d32;
  font-size: 13px;
  font-weight: 500;
  color: #85868a;
  white-space: nowrap;
}

.orders i {
  font-style: normal;
  font-weight: 400;
  color: #595b62;
}

.orders mark {
  padding: 3px 4px;
  background: #23332f;
  color: #34694d;
  border-radius: 2px;
}

.orders s {
  display: inline-block;
  width: 19px;
  margin-right: 6px;
  line-height: 19px;
  text-align: center;
  text-decoration: none;
  background: #2f3138;
  color: #55565b;
  border-radius: 3px;
}

.orders .neg { color: #7b343b; }
.orders .pos { color: #34694d; }
.orders .dim { color: #55585f; }

.actions {
  display: flex;
  justify-content: flex-end;
  gap: 5px;
  padding-right: 7px;
}

.actions button {
  height: 25px;
  padding: 0 11px;
  font-size: 13px;
  font-weight: 700;
  color: #707176;
  background: #23262c;
  border: 1px solid #2d2f36;
  border-radius: 4px;
}

.actions .dl {
  padding: 0 4px;
}

.thumb {
  position: absolute;
  top: 40px;
  right: -3px;
  width: 3px;
  height: 65px;
  background: #2c6475;
}

/* Modal */
.overlay {
  position: absolute;
  inset: 0;
  display: grid;
  place-items: center;
  font-family: "Noto Sans", sans-serif;
}

.modal {
  position: relative;
  width: 900px;
  padding: 37px 40px 78px;
  background: #101014;
  border-radius: 22px;
  box-shadow: 0 0 16px rgba(255, 255, 255, 0.35);
  color: #9a9aa6;
  text-align: center;
}

.close {
  position: absolute;
  top: 46px;
  right: 46px;
}

.modal h1 {
  font-size: 30px;
  line-height: 48px;
  color: #fff;
}

.tabs {
  margin-top: 23px;
  display: grid;
  grid-template-columns: repeat(3, 1fr);
  gap: 13px;
}

.tabs button {
  height: 34px;
  padding-top: 2px;
  font-size: 20px;
  line-height: 30px;
  border-bottom: 2px solid #59595d;
}

.tabs .on {
  color: #fff;
  font-weight: 600;
  border-color: #5fe38a;
}

.notice {
  margin: 20px 0 10px;
  padding: 10px 13px;
  display: flex;
  align-items: flex-start;
  background: #17191a;
  border-radius: 6px;
}

.notice > svg {
  margin: 3px 12px 0 0;
}

.notice p {
  flex: 1;
  text-align: left;
  font-size: 20px;
  line-height: 27px;
  color: #fff;
}

.notice button {
  padding: 4px 2px 0 0;
}

.withdraw {
  width: 410px;
  margin: 0 auto;
  display: flex;
  flex-direction: column;
  font-size: 18px;
  line-height: 24px;
}

.amount {
  height: 66px;
  margin-bottom: 13px;
  padding: 0 0 5px 173px;
  display: flex;
  align-items: center;
  gap: 10px;
  font-size: 36px;
  border-bottom: 1px solid #fff;
}

.amount input {
  width: 100px;
}

.amount input::placeholder {
  color: #6f6f6f;
}

.avail {
  margin-bottom: 21px;
}

.avail b {
  display: inline-block;
  margin-left: 3px;
  font-size: 20px;
  font-weight: 500;
  color: #fff;
  border-bottom: 1px dashed #c1924a;
}

.withdraw textarea {
  height: 112px;
  padding: 11px 19px;
  font-size: 20px;
  line-height: 30px;
  border: 1px solid #707076;
  border-radius: 5px;
  resize: none;
}

.withdraw textarea::placeholder {
  color: #8b8b95;
}

.withdraw button {
  height: 62px;
  margin-top: 46px;
  font: bold 22px "Liberation Sans", Arial, sans-serif;
  color: #fff;
  background: #c1924a;
  border-radius: 10px;
}

.status-url {
  position: absolute;
  left: 0;
  bottom: 0;
  padding: 0 12px 0 10px;
  font: 15px/34px "Noto Sans", sans-serif;
  color: #505050;
  background: #f8f8f8;
}

/* Taskbar */
.taskbar {
  flex: none;
  height: 58px;
  padding: 0 22px 0 25px;
  display: grid;
  grid-template-columns: 1fr auto 1fr;
  align-items: center;
  border-top: 1px solid #6b5547;
  background: linear-gradient(90deg, #261d19, #351f15 24%, #35201a 50%, #331e13);
  font-family: "Noto Sans", sans-serif;
  font-size: 15px;
  line-height: 20px;
  color: #fff;
}

.widget {
  display: flex;
  gap: 5px;
}

.widget b {
  display: block;
  font-weight: 400;
  color: #ff99a4;
}

.coins {
  position: relative;
}

.coins span {
  position: absolute;
  top: -1px;
  right: 0;
  width: 20px;
  height: 20px;
  text-align: center;
  border-radius: 50%;
  background: #ff99a4;
  color: #111;
}

.dock {
  display: flex;
  align-items: center;
  gap: 5px;
}

.dock button {
  position: relative;
  width: 50px;
  height: 50px;
  display: grid;
  place-items: center;
  border-radius: 5px;
}

.run::after {
  content: "";
  position: absolute;
  bottom: 0;
  width: 8px;
  height: 4px;
  border-radius: 2px;
  background: #a09894;
}

.dock .current {
  background: #432d26;
  border: 1px solid #4e3a32;
}

.current::after {
  width: 20px;
  background: #4cc2ff;
}

.count {
  position: absolute;
  top: 3px;
  right: 0;
  width: 25px;
  line-height: 21px;
  text-align: center;
  border-radius: 11px;
  background: #4cb8f5;
  color: #111;
}

.find {
  width: 276px;
  height: 41px;
  padding: 0 20px 0 15px;
  display: flex;
  align-items: center;
  gap: 12px;
  border: 1px solid #6b574d;
  border-radius: 21px;
  background: #4b362d;
  font-size: 16px;
}

.find input {
  flex: 1;
  min-width: 0;
}

.find input::placeholder {
  color: #e0dad6;
}

.tray {
  display: flex;
  justify-content: flex-end;
  align-items: center;
  gap: 9px;
  text-align: right;
}

.tray .cloud {
  margin: 0 9px 0 14px;
}

.tray p {
  width: 80px;
}

.watermark {
  position: fixed;
  inset: 0;
  pointer-events: none;
}

.wiki-text {
  font: bold 66px "Noto Sans", sans-serif;
  fill: rgb(93, 35, 35);
  stroke: rgb(93, 35, 35);
  stroke-width: 2;
  stroke-linejoin: round;
  opacity: 0.12;
}
```
